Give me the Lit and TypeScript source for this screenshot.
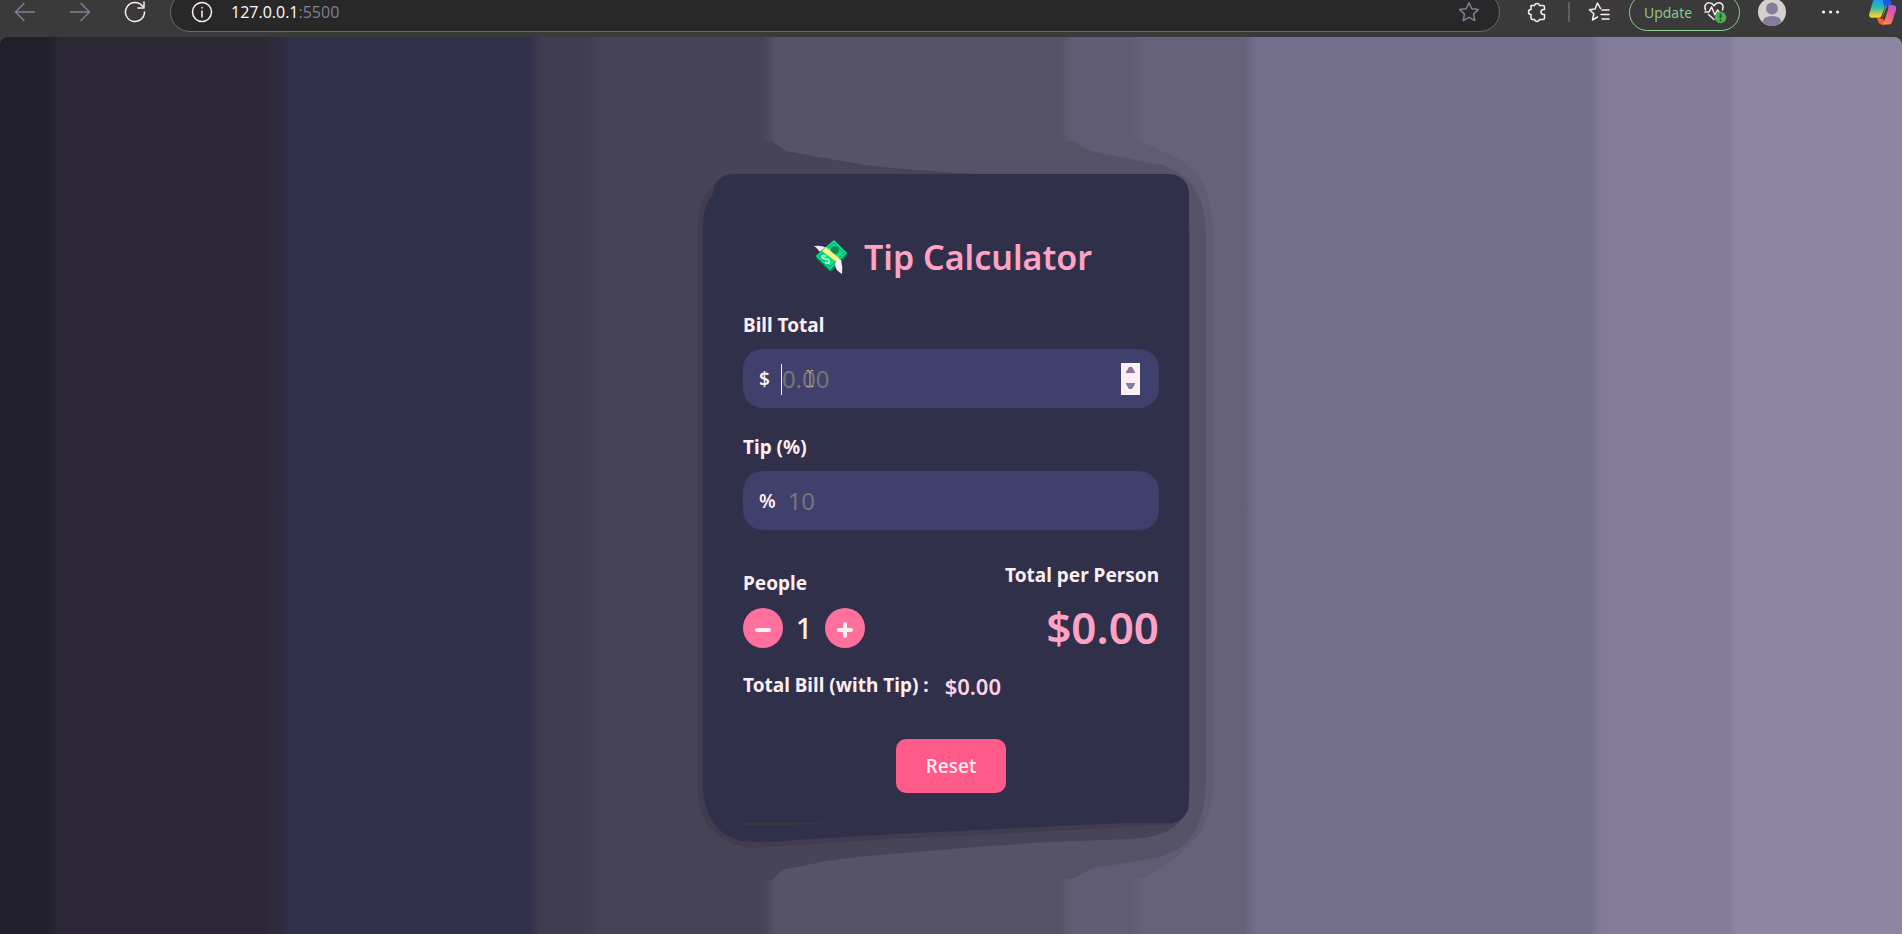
import { LitElement, html, css, svg } from "lit";
import { customElement, state } from "lit/decorators.js";

@customElement("browser-bar")
class BrowserBar extends LitElement {
  static styles = css`
    :host {
      display: block;
      overflow: hidden;
      height: 37px;
      background: #3a3a3a;
      font-family: "Open Sans", "Noto Sans", sans-serif;
    }
    .bar {
      display: flex;
      align-items: center;
      height: 40px;
      margin-top: -8px;
      padding: 0 5px 0 14px;
    }
    button {
      display: block;
      flex: none;
      padding: 0;
      border: 0;
      background: none;
      color: #fdeef4;
      font: inherit;
    }
    svg {
      display: block;
      fill: none;
      stroke: currentColor;
      stroke-width: 1.5;
      stroke-linecap: round;
      stroke-linejoin: round;
    }
    .nav {
      display: flex;
      gap: 33px;
      margin-right: 24px;
    }
    .dim {
      color: #857c98;
    }
    .address {
      box-sizing: border-box;
      display: flex;
      flex: 1;
      align-items: center;
      gap: 18px;
      min-width: 0;
      height: 40px;
      padding: 0 19px 0 20px;
      border: 1px solid #6b696e;
      border-radius: 20px;
      background: #282828;
    }
    .url {
      flex: 1;
      color: #fff;
      font-size: 16px;
      line-height: 22px;
    }
    .port {
      color: #857c98;
    }
    .tools {
      display: flex;
      align-items: center;
      margin-left: 26px;
    }
    .rule {
      width: 2px;
      height: 20px;
      margin: 0 18px 0 20px;
      background: #5f5d62;
    }
    .update {
      box-sizing: border-box;
      display: flex;
      align-items: center;
      gap: 11px;
      height: 37px;
      margin: 0 18px 0 19px;
      padding: 0 12px 0 14px;
      border: 1px solid #8fce92;
      border-radius: 19px;
      color: #8fce92;
      font-size: 14px;
    }
    .more {
      margin: 0 28px 0 33px;
    }
  `;

  render() {
    return html`
      <div class="bar">
        <div class="nav">
          <button class="dim" aria-label="Back">
            <svg width="22" height="22" viewBox="0 0 22 22"><path d="M20.500 11H1.500M10 2.500 1.500 11l8.500 8.500" /></svg>
          </button>
          <button class="dim" aria-label="Forward">
            <svg width="22" height="22" viewBox="0 0 22 22"><path d="M1.500 11h19M12 2.500l8.500 8.500-8.500 8.500" /></svg>
          </button>
          <button aria-label="Refresh">
            <svg width="22" height="22" viewBox="0 0 22 22">
              <path d="M20.500 11A9.500 9.500 0 1 1 18.500 5.200M20 1v6h-6" />
            </svg>
          </button>
        </div>
        <div class="address">
          <button aria-label="Site information">
            <svg width="22" height="22" viewBox="0 0 22 22">
              <circle cx="11" cy="11" r="9.500" /><path d="M11 10v6M11 6.500v.4" />
            </svg>
          </button>
          <span class="url">127.0.0.1<span class="port">:5500</span></span>
          <button class="dim" aria-label="Add to favorites">
            <svg width="22" height="22" viewBox="0 0 22 22">
              <path d="m11 1.800 2.800 6 6.500.8-4.800 4.500 1.300 6.500-5.800-3.200-5.800 3.200 1.300-6.500L1.700 8.600l6.500-.8z" />
            </svg>
          </button>
        </div>
        <div class="tools">
          <button aria-label="Extensions">
            <svg width="22" height="22" viewBox="0 0 22 22">
              <path d="M5 4.500h3.500a2.600 2.600 0 0 1 5 0H17q1.500 0 1.500 1.500v2.500h-1a2.500 2.500 0 0 0 0 5h1V17q0 1.500-1.500 1.500h-3.500a2.600 2.600 0 0 1-5 0H6.500Q5 18.500 5 17v-3.500a2.500 2.500 0 0 1 0-5z" />
            </svg>
          </button>
          <span class="rule"></span>
          <button aria-label="Favorites">
            <svg width="22" height="22" viewBox="0 0 22 22">
              <path d="M12.500 7.500 9.500 2 7 8l-5.500.8 4.300 4L4.500 19l5-3M14 9h7M13 13.500h8M14 18h7" />
            </svg>
          </button>
          <button class="update">
            Update
            <svg width="24" height="24" viewBox="0 0 24 24">
              <path stroke="#fdeef4" d="M2.500 10C.5 5 4 2.500 6.500 2.800q2.800.2 4.500 3 1.700-2.800 4.500-3C19 2.500 21.500 6 19.500 10M2 12h4l2.500-5 3.500 8 2.500-5 1.500 2M5.500 14.500l5.500 5" />
              <circle cx="17.500" cy="17.500" r="5.800" fill="#4fae4f" stroke="none" />
              <path stroke="#24552a" stroke-width="2" d="M17.500 14.500v3M17.500 20.500v.1" />
            </svg>
          </button>
          <button aria-label="Profile">
            <svg width="28" height="28" viewBox="0 0 28 28">
              <circle cx="14" cy="14" r="14" fill="#d3d0cd" stroke="none" />
              <circle cx="14" cy="10.500" r="6" fill="#857c9b" stroke="none" />
              <path d="M4.500 24q1-6 9.500-6t9.500 6q-9.500 8-19 0z" fill="#857c9b" stroke="none" />
            </svg>
          </button>
          <button class="more" aria-label="Settings and more">
            <svg width="22" height="22" viewBox="0 0 22 22">
              <path stroke-width="3" d="M4.500 11h.1M11.500 11h.1M18.500 11h.1" />
            </svg>
          </button>
          <button aria-label="Copilot">
            <svg width="28" height="28" viewBox="0 0 29 28">
              <defs>
                <linearGradient id="cool" x1="0" y1="0" x2="0" y2="1">
                  <stop offset="0.1" stop-color="#1b9bf0" />
                  <stop offset="0.5" stop-color="#2fc3a4" />
                  <stop offset="0.900" stop-color="#f6d12c" />
                </linearGradient>
                <linearGradient id="warm" x1="1" y1="0" x2="0.300" y2="1">
                  <stop offset="0" stop-color="#a35cf0" />
                  <stop offset="0.5" stop-color="#f0569a" />
                  <stop offset="1" stop-color="#ff8a4c" />
                </linearGradient>
              </defs>
              <path stroke="none" fill="url(#cool)" d="M8 0h10q3 0 2 4l-5 13q-1 3-4 3H4q-5 0-3.500-5L4 3q1-3 4-3z" />
              <path stroke="none" fill="#2459e0" d="M14 0h6q2 0 3 4l1 3h-4q-3 0-4 3z" />
              <path stroke="none" fill="#f2603c" d="M8 20h6l3 7h-4q-2 0-3-2z" />
              <path stroke="none" fill="url(#warm)" d="M20 7h5q4 0 3 5l-4 12q-1 3-4 3h-7q2-1 3-4l4-13z" />
              <path stroke="none" fill="#3a3a3a" d="m16 10-3 8q-1 2-2 2h1l1 2 4-13z" />
            </svg>
          </button>
        </div>
      </div>
    `;
  }
}

const bands = [
  { edge: 0, color: "#211f2c" },
  { edge: 53, color: "#2b2736" },
  { edge: 270, color: "#2f2b3c" },
  { edge: 285, color: "#30304a" },
  { edge: 535, color: "#413d50" },
  { edge: 595, color: "#474457" },
  { edge: 1220, color: "#67627b" },
  { edge: 1251, color: "#756f8e" },
  { edge: 1596, color: "#827b99" },
  { edge: 1732, color: "#8c86a3" },
];

@customElement("app-root")
class AppRoot extends LitElement {
  static styles = css`
    :host {
      display: flex;
      flex-direction: column;
      min-height: 100vh;
      background: #3a3a3a;
      color: #fdeef4;
      font-family: "Noto Sans", "Open Sans", sans-serif;
    }
    main {
      position: relative;
      box-sizing: border-box;
      display: flex;
      flex: 1;
      align-items: center;
      justify-content: center;
      overflow: hidden;
      padding-top: 26px;
      border-radius: 8px 8px 0 0;
    }
    .backdrop {
      position: absolute;
      inset: 0;
      width: 100%;
      height: 100%;
    }
    .card {
      position: relative;
      box-sizing: border-box;
      width: 476px;
      max-width: 100%;
      padding: 53px 30px 30px;
      border-radius: 20px;
      background: #30304a;
    }
    .heading {
      display: flex;
      align-items: center;
      justify-content: center;
      gap: 17px;
      margin: 0 0 24px;
      color: #ffa3c4;
      font-size: 34px;
      font-weight: 600;
      line-height: 60px;
    }
    .label {
      display: block;
      font-size: 19px;
      font-weight: 700;
      line-height: 28px;
    }
    .field {
      position: relative;
      display: flex;
      align-items: center;
      gap: 12px;
      height: 59px;
      margin: 10px 0 25px;
      padding: 0 19px 0 16px;
      border-radius: 20px;
      background: #3f406b;
    }
    .unit {
      font-size: 19px;
      font-weight: 600;
    }
    input {
      flex: 1;
      min-width: 0;
      height: 36px;
      padding: 0;
      border: 0;
      outline: 0;
      background: none;
      color: #fdeef4;
      font: 400 24px "Noto Sans", sans-serif;
      appearance: textfield;
    }
    input::placeholder {
      color: #757575;
    }
    input::-webkit-inner-spin-button {
      appearance: none;
      margin: 0;
    }
    .stepper {
      display: flex;
      flex-direction: column;
      width: 19px;
      height: 32px;
      background: #fdeef4;
    }
    .step {
      display: flex;
      flex: 1;
      align-items: center;
      justify-content: center;
      padding: 0;
      border: 0;
      background: none;
    }
    .caret {
      position: absolute;
      top: 15px;
      left: 38px;
      width: 1px;
      height: 31px;
      background: #fdeef4;
    }
    .pointer {
      position: absolute;
      top: 21px;
      left: 63px;
    }
    .summary {
      display: flex;
      justify-content: space-between;
      margin: 31px 0 14px;
    }
    .people {
      display: flex;
      flex-direction: column;
      gap: 11px;
      padding-top: 8px;
    }
    .counter {
      display: flex;
      align-items: center;
      gap: 12px;
    }
    .round {
      display: flex;
      align-items: center;
      justify-content: center;
      width: 40px;
      height: 40px;
      padding: 0;
      border: 0;
      border-radius: 50%;
      background: #ff719c;
    }
    .count {
      min-width: 18px;
      font-size: 29px;
      font-weight: 500;
      line-height: 40px;
      text-align: center;
    }
    .share {
      display: flex;
      flex-direction: column;
      gap: 8px;
      text-align: right;
    }
    .amount {
      color: #ffa3c4;
      font-size: 44px;
      font-weight: 600;
      line-height: 60px;
    }
    .total {
      display: flex;
      gap: 16px;
      margin-bottom: 40px;
    }
    .sum {
      height: 28px;
      color: #ffd3e6;
      font-size: 22px;
      font-weight: 600;
      line-height: 30px;
    }
    .reset {
      display: block;
      width: 110px;
      height: 54px;
      margin: 0 auto;
      padding: 0;
      border: 0;
      border-radius: 10px;
      background: #ff5a8a;
      color: #fdeef4;
      font: 500 19px "Noto Sans", sans-serif;
    }
  `;

  @state() bill = "";
  @state() tip = "";
  @state() people = 1;

  get total() {
    return (Number(this.bill) || 0) * (1 + (Number(this.tip) || 0) / 100);
  }

  nudge(by: number) {
    this.bill = String(Math.max(0, (Number(this.bill) || 0) + by));
  }

  reset() {
    this.bill = "";
    this.tip = "";
    this.people = 1;
  }

  backdrop() {
    return html`
      <svg class="backdrop" viewBox="0 37 1902 897" preserveAspectRatio="xMidYMid slice" aria-hidden="true">
        <defs>
          <linearGradient id="bands" gradientUnits="userSpaceOnUse" x1="0" y1="0" x2="1902" y2="0">
            ${bands.map((b, i) => svg`
              ${i ? svg`<stop offset=${(b.edge - 6) / 1902} stop-color=${bands[i - 1].color} />` : ""}
              <stop offset=${(b.edge + (i ? 6 : 0)) / 1902} stop-color=${b.color} />`)}
          </linearGradient>
          <linearGradient id="mid" gradientUnits="userSpaceOnUse" x1="763" y1="0" x2="776" y2="0">
            <stop offset="0" stop-color="#474457" />
            <stop offset="1" stop-color="#565268" />
          </linearGradient>
          <linearGradient id="far" gradientUnits="userSpaceOnUse" x1="1060" y1="0" x2="1073" y2="0">
            <stop offset="0" stop-color="#565268" />
            <stop offset="1" stop-color="#605c73" />
          </linearGradient>
          <linearGradient id="edge" gradientUnits="userSpaceOnUse" x1="1130" y1="0" x2="1144" y2="0">
            <stop offset="0" stop-color="#605c73" />
            <stop offset="1" stop-color="#67627b" />
          </linearGradient>
        </defs>
        <rect y="37" width="1902" height="897" fill="url(#bands)" />
        <path fill="url(#mid)" d="M763 37V141H772L786 151 819 157 865 165 903 169 960 173 985 174 1180 178 1188 215 1190 235V780Q1190 802 1183 818 1175 829 1163 833 1150 838 1133 839L1050 842 990 846 903 853 857 857 827 861 807 865 782 870 772 880H763V934H1240V37z" />
        <path fill="url(#far)" d="M1060 37V141H1074L1088 150 1106 154 1135 160 1163 165Q1178 171 1188 180 1206 200 1206 235V780Q1206 800 1200 820 1195 837 1180 848 1170 854 1160 857L1133 862 1093 868 1072 879H1060V934H1240V37z" />
        <path fill="url(#edge)" d="M1130 37V141H1140L1160 150Q1187 160 1200 178 1213 200 1213 235V780Q1213 815 1198 836 1182 856 1160 868L1144 878 1130 880V934H1240V37z" />
        <path fill="#413c50" d="M697 235Q697 193 717 184L760 500 1188 600V810L1173 824 1057 831 957 836 877 840 752 848Q724 845 709 827 697 810 697 780z" />
        <path fill="#30304a" d="M703 225Q703 205 713 194L760 500 1188 600V810L1173 823H1123L1057 826 957 831 877 835 810 839 772 842 740 841Q704 831 703 785z" />
        <path fill="#3a3a3e" d="M738 823H835L790 825H745z" />
      </svg>
    `;
  }

  render() {
    return html`
      <browser-bar></browser-bar>
      <main>
        ${this.backdrop()}
        <section class="card">
          <h1 class="heading">
            <svg width="37" height="36" viewBox="-4 0 37 36" aria-hidden="true">
              <path fill="#f2e6f0" d="M0 7q7-1 13 2l-6 8Q6 11 0 7z" />
              <path fill="#087f52" d="M20 1 33 14v3L18 32h-3L2 19v-3z" />
              <path fill="#0ae08a" d="M20 1 33 14 16 31 2 17z" />
              <path fill="none" stroke="#07a366" d="m20 4 10 10-14 14L5 17z" />
              <circle cx="21" cy="11" r="4" fill="#078a56" />
              <path fill="none" stroke="#c9ffe6" stroke-width="1.500" d="M12 17q-4-1-4 1t4 2 3 4q-2 1-4-1" />
              <path fill="#fff17a" d="m12 8-4 4 16 12 2-4z" />
              <path fill="#fdeef4" d="m23 21 4 0q2 7 1 14-7-4-7-10z" />
            </svg>
            Tip Calculator
          </h1>

          <label class="label" for="bill">Bill Total</label>
          <div class="field">
            <span class="unit">$</span>
            <input id="bill" type="number" placeholder="0.00" .value=${this.bill}
              @input=${(e: InputEvent) => (this.bill = (e.target as HTMLInputElement).value)} />
            <span class="stepper">
              <button class="step" aria-label="Increase bill" @click=${() => this.nudge(1)}>
                <svg width="9" height="7" viewBox="0 0 9 7"><path fill="#857c9b" d="M3 0h3l3 5v1H0V5z" /></svg>
              </button>
              <button class="step" aria-label="Decrease bill" @click=${() => this.nudge(-1)}>
                <svg width="9" height="7" viewBox="0 0 9 7"><path fill="#857c9b" d="M0 0h9v1L6 6H3L0 1z" /></svg>
              </button>
            </span>
            ${this.bill ? "" : html`<span class="caret"></span>`}
            <svg class="pointer" width="8" height="17" viewBox="0 0 8 17" aria-hidden="true">
              <path fill="none" stroke="#cfae9c" d="M.5 .5h2.500L4 1.500 5 .5h2.500M4 1.500v14M.5 16.500h2.500L4 15.500l1 1h2.500" />
            </svg>
          </div>

          <label class="label" for="tip">Tip (%)</label>
          <div class="field">
            <span class="unit">%</span>
            <input id="tip" type="number" placeholder="10" .value=${this.tip}
              @input=${(e: InputEvent) => (this.tip = (e.target as HTMLInputElement).value)} />
          </div>

          <div class="summary">
            <div class="people">
              <span class="label">People</span>
              <div class="counter">
                <button class="round" aria-label="Fewer people" @click=${() => (this.people = Math.max(1, this.people - 1))}>
                  <svg width="16" height="16" viewBox="0 0 16 16"><path stroke="#fdeef4" stroke-width="4" stroke-linecap="round" d="M2 10h12" /></svg>
                </button>
                <span class="count">${this.people}</span>
                <button class="round" aria-label="More people" @click=${() => (this.people += 1)}>
                  <svg width="16" height="20" viewBox="0 0 16 20"><path stroke="#fdeef4" stroke-width="4" stroke-linecap="round" d="M2 12h12M8 6v12" /></svg>
                </button>
              </div>
            </div>
            <div class="share">
              <span class="label">Total per Person</span>
              <span class="amount">$${(this.total / this.people).toFixed(2)}</span>
            </div>
          </div>

          <div class="total">
            <span class="label">Total Bill (with Tip) :</span>
            <span class="sum">$${this.total.toFixed(2)}</span>
          </div>
          <button class="reset" @click=${this.reset}>Reset</button>
        </section>
      </main>
    `;
  }
}
